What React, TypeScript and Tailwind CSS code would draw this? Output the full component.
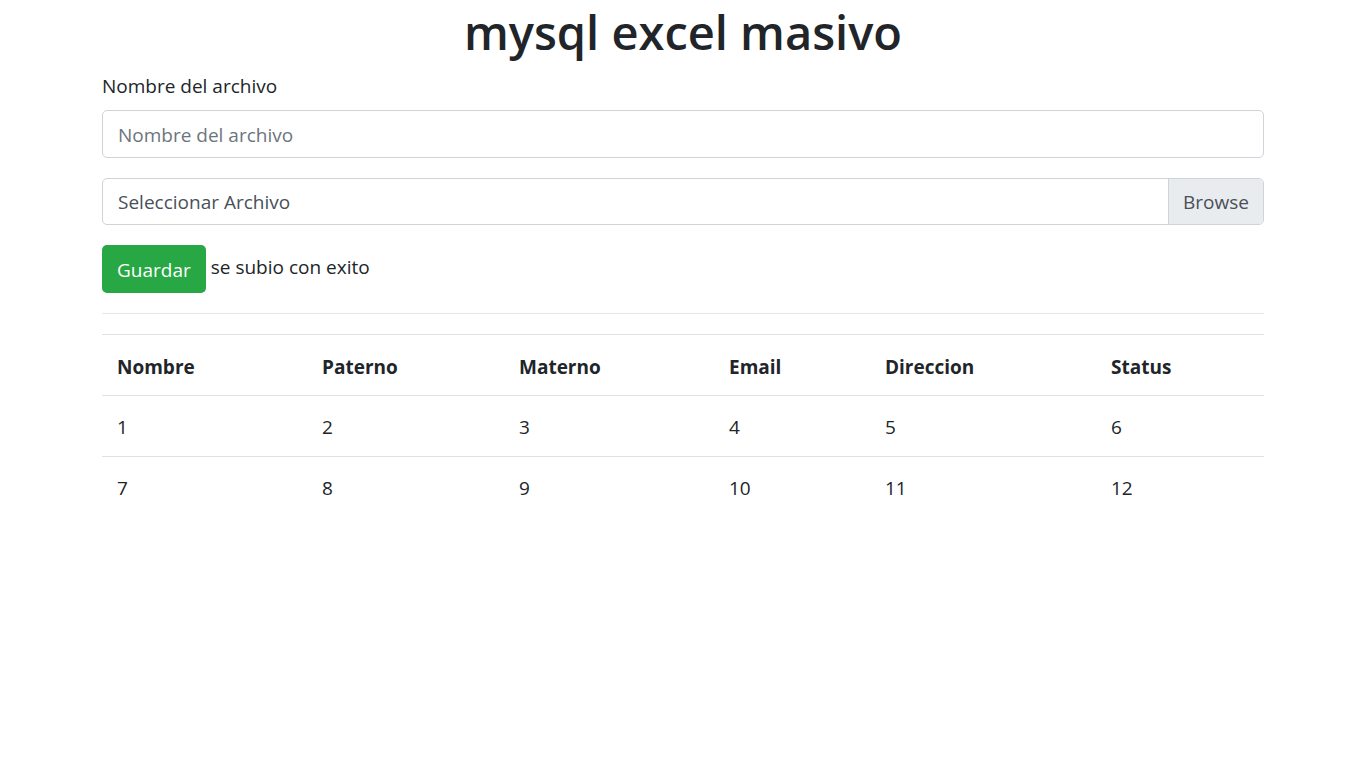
import React from 'react';

const columns = [
  { label: 'Nombre', w: 'w-[205px]' },
  { label: 'Paterno', w: 'w-[197px]' },
  { label: 'Materno', w: 'w-[210px]' },
  { label: 'Email', w: 'w-[156px]' },
  { label: 'Direccion', w: 'w-[226px]' },
  { label: 'Status', w: 'w-[168px]' },
];

const rows = [
  ['1', '2', '3', '4', '5', '6'],
  ['7', '8', '9', '10', '11', '12'],
];

const App: React.FC = () => {
  return (
    <div className="min-h-screen bg-white text-[#212529] font-['Open_Sans',sans-serif] text-[19px] leading-[30px]">
      <div className="max-w-[1200px] mx-auto px-[19px]">
        <h1 className="text-center text-[47px] font-semibold leading-[60px] mb-[8px] pt-[2px]">mysql excel masivo</h1>

        <div className="mb-[20px]">
          <label className="block pt-[1px] mb-[9px]">Nombre del archivo</label>
          <input
            type="text"
            placeholder="Nombre del archivo"
            className="block w-full h-[48px] px-[15px] pt-[1px] border border-[#ced4da] rounded-[5px] text-[#495057] placeholder:text-[#6c757d] outline-none"
          />
        </div>

        <div className="mb-[20px] flex h-[47px] border border-[#ced4da] rounded-[5px] overflow-hidden">
          <div className="flex-1 flex items-center px-[15px] pt-[1px] text-[#495057]">Seleccionar Archivo</div>
          <div className="w-[95px] flex items-center justify-center pt-[1px] bg-[#e9ecef] border-l border-[#ced4da] text-[#495057]">Browse</div>
        </div>

        <div className="flex items-center gap-[5px]">
          <button className="h-[48px] px-[15px] pt-[1px] bg-[#28a745] text-white rounded-[5px]">Guardar</button>
          <span className="mb-[5px]">se subio con exito</span>
        </div>

        <hr className="mt-[20px] mb-[20px] border-t border-[#e6e6e6]" />

        <table className="w-full table-fixed border-collapse">
          <thead>
            <tr>
              {columns.map((c) => (
                <th key={c.label} className={`${c.w} text-left font-bold px-[15px] pt-[17px] pb-[13px] border-t border-[#dee2e6]`}>
                  {c.label}
                </th>
              ))}
            </tr>
          </thead>
          <tbody>
            {rows.map((r, i) => (
              <tr key={i}>
                {r.map((v, j) => (
                  <td key={j} className="px-[15px] pt-[16px] pb-[14px] border-t border-[#dee2e6]">{v}</td>
                ))}
              </tr>
            ))}
          </tbody>
        </table>
      </div>
    </div>
  );
};

export default App;
